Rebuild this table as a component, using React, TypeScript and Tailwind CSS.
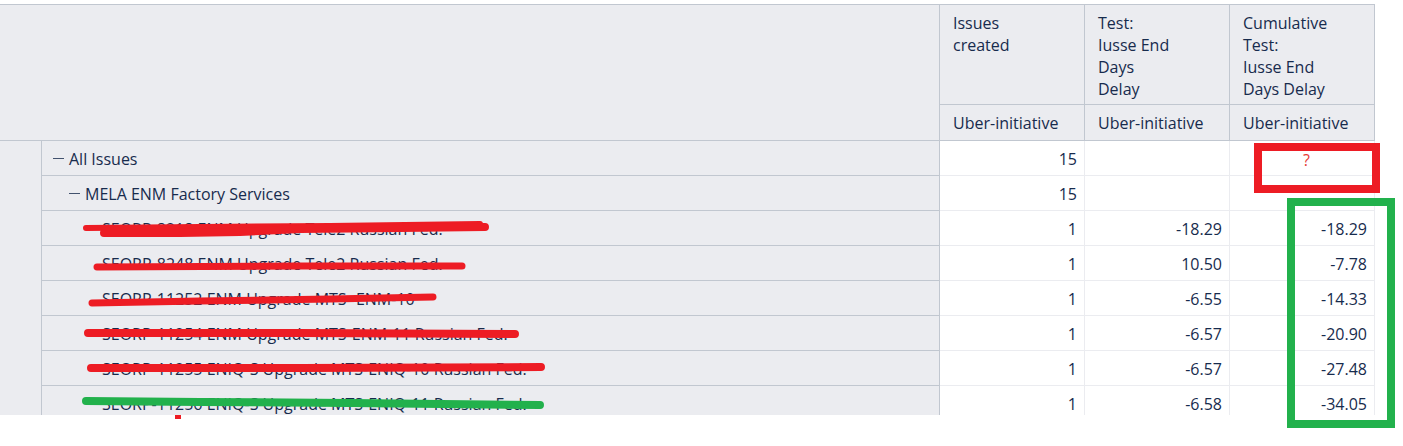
import * as React from "react";

type Row = {
  label: string;
  level: number;
  toggle?: boolean;
  issues: string;
  delay: string;
  cum: string;
};

const rows: Row[] = [
  { label: "All Issues", level: 0, toggle: true, issues: "15", delay: "", cum: "?" },
  { label: "MELA ENM Factory Services", level: 1, toggle: true, issues: "15", delay: "", cum: "" },
  { label: "SEORP-8218 ENM Upgrade Tele2 Russian Fed.", level: 2, issues: "1", delay: "-18.29", cum: "-18.29" },
  { label: "SEORP-8248 ENM Upgrade Tele2 Russian Fed.", level: 2, issues: "1", delay: "10.50", cum: "-7.78" },
  { label: "SEORP-11252 ENM Upgrade MTS- ENM-10", level: 2, issues: "1", delay: "-6.55", cum: "-14.33" },
  { label: "SEORP-11254 ENM Upgrade MTS-ENM-11 Russian Fed.", level: 2, issues: "1", delay: "-6.57", cum: "-20.90" },
  { label: "SEORP-11255 ENIQ-S Upgrade MTS-ENIQ-10 Russian Fed.", level: 2, issues: "1", delay: "-6.57", cum: "-27.48" },
  { label: "SEORP-11256 ENIQ-S Upgrade MTS-ENIQ-11 Russian Fed.", level: 2, issues: "1", delay: "-6.58", cum: "-34.05" },
];

const indent = ["pl-[11px]", "pl-[27px]", "pl-[44px]"];

function Scribbles() {
  // marker strokes drawn over the hidden issue names
  return (
    <svg className="pointer-events-none absolute left-0 top-0" width="1403" height="446">
      <g fill="none" strokeLinecap="round" strokeLinejoin="round">
        <polyline points="86,228 200,227 330,226 480,224" stroke="#ed1c24" strokeWidth="6" />
        <polyline points="104,233 180,233 240,232 300,229 400,228 485,227" stroke="#ed1c24" strokeWidth="8" />
        <polyline points="97,267 300,266 462,266" stroke="#ed1c24" strokeWidth="7" />
        <polyline points="92,303 200,301 330,299 433,297" stroke="#ed1c24" strokeWidth="7" />
        <polyline points="88,333 300,333 515,334" stroke="#ed1c24" strokeWidth="8" />
        <polyline points="91,368 300,368 541,367" stroke="#ed1c24" strokeWidth="8" />
        <polyline points="86,401 200,402 350,403 540,405" stroke="#22b14c" strokeWidth="8" />
      </g>
    </svg>
  );
}

export default function App() {
  return (
    <div className="relative h-[446px] w-[1403px] overflow-hidden bg-white font-['Open_Sans',sans-serif] text-[16px] text-[#172b4d]">
      <div className="pt-[4px]">
        <div className="w-[1375px]">
          {/* header */}
          <div className="flex h-[137px] border-y border-[#c1c7d0] bg-[#ebecf0]">
            <div className="w-[940px] border-r border-[#c1c7d0]" />
            {[
              ["Issues", "created"],
              ["Test:", "Iusse End", "Days", "Delay"],
              ["Cumulative", "Test:", "Iusse End", "Days Delay"],
            ].map((lines, i) => (
              <div key={i} className="flex w-[145px] flex-col border-r border-[#c1c7d0]">
                <div className="h-[100px] border-b border-[#c1c7d0] pl-[13px] pt-[7px] leading-[22px]">
                  {lines.map((l) => (
                    <div key={l}>{l}</div>
                  ))}
                </div>
                <div className="flex flex-1 items-center pl-[13px]">Uber-initiative</div>
              </div>
            ))}
          </div>
          {/* body */}
          <div className="flex h-[274px] overflow-hidden">
            <div className="w-[42px] shrink-0 border-r border-[#c1c7d0] bg-[#ebecf0]" />
            <div className="flex flex-col">
              {rows.map((r, i) => (
                <div key={i} className="flex h-[35px] shrink-0">
                  <div
                    className={`flex w-[898px] items-center border-b border-r border-[#c1c7d0] bg-[#ebecf0] pt-px ${indent[r.level]}`}
                  >
                    {r.toggle ? (
                      <span className="mr-[5px] h-px w-[11px] bg-[#42526e]" />
                    ) : (
                      <span className="w-[16px]" />
                    )}
                    <span>{r.label}</span>
                  </div>
                  <div className="flex w-[145px] items-center justify-end border-b border-r border-[#ebecf0] pr-[7px] pt-px">
                    {r.issues}
                  </div>
                  <div className="flex w-[145px] items-center justify-end border-b border-r border-[#ebecf0] pr-[7px] pt-px">
                    {r.delay}
                  </div>
                  {r.cum === "?" ? (
                    <div className="flex w-[145px] items-center justify-center border-b border-r border-[#ebecf0] pl-[9px] pt-[4px] text-[16px] text-[#e53935]">
                      ?
                    </div>
                  ) : (
                    <div className="flex w-[145px] items-center justify-end border-b border-r border-[#ebecf0] pr-[7px] pt-px">
                      {r.cum}
                    </div>
                  )}
                </div>
              ))}
            </div>
          </div>
        </div>
      </div>

      {/* annotation boxes */}
      <div className="absolute left-[1254px] top-[143px] h-[50px] w-[126px] border-[8px] border-[#ed1c24]" />
      <div className="absolute left-[1287px] top-[198px] h-[230px] w-[108px] border-[8px] border-[#22b14c]" />
      <div className="absolute left-[175px] top-[415px] h-[4px] w-[6px] bg-[#ed1c24]" />
      <Scribbles />
    </div>
  );
}
